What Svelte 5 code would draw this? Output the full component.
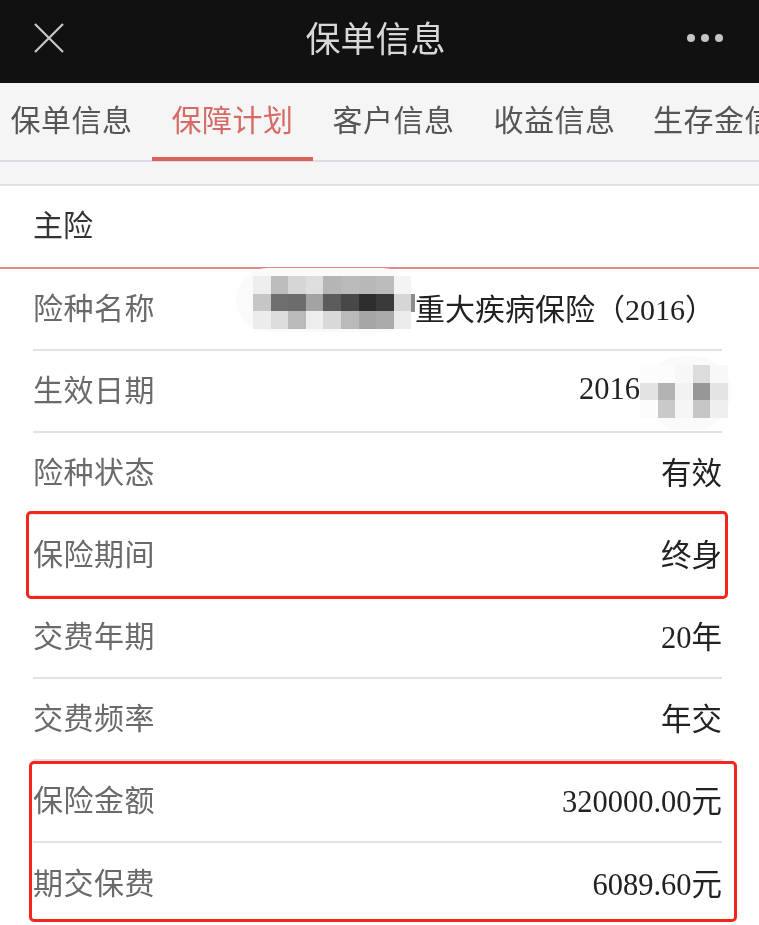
<script>
  const tabs = ['保单信息', '保障计划', '客户信息', '收益信息', '生存金信息'];
  const rows = [
    { label: '险种名称', value: '重大疾病保险（2016）', inset: 'name' },
    { label: '生效日期', value: '2016', inset: 'date' },
    { label: '险种状态', value: '有效' },
    { label: '保险期间', value: '终身' },
    { label: '交费年期', value: '20年' },
    { label: '交费频率', value: '年交' },
    { label: '保险金额', value: '320000.00元' },
    { label: '期交保费', value: '6089.60元' }
  ];
  const mosaicA = [
    '#eeeeee', '#bdbdbd', '#d6d6d6', '#dedede', '#b5b5b5', '#bababa', '#b8b8b8', '#bcbcbc', '#f4f4f4',
    '#c6c6c6', '#6f6f6f', '#6c6c6c', '#a3a3a3', '#5c5c5c', '#484848', '#2e2e2e', '#3a3a3a', '#d6d6d6',
    '#ececec', '#dcdcdc', '#b9b9b9', '#eeeeee', '#d9d9d9', '#b9b9b9', '#a6a6a6', '#ababab', '#ececec'
  ];
  const mosaicB = [
    '#fcfcfc', '#fcfcfc', '#f7f7f7', '#dcdcdc', '#f8f8f8',
    '#e3e3e3', '#b3b3b3', '#f2f2f2', '#979797', '#e4e4e4',
    '#fcfcfc', '#c9c9c9', '#f5f5f5', '#c6c6c6', '#efefef'
  ];
</script>

<div class="page">
  <header class="nav">
    <svg class="close" viewBox="0 0 32 32" width="32" height="32" aria-hidden="true">
      <path d="M2 2 L30 30 M30 2 L2 30" fill="none" stroke="#c8c8c8" stroke-width="2.2" />
    </svg>
    <h1>保单信息</h1>
    <div class="dots"><i></i><i></i><i></i></div>
  </header>

  <nav class="tabs">
    {#each tabs as tab, i}
      <div class="tab" class:active={i === 1} class:clipped={i === 4}>{tab}</div>
    {/each}
  </nav>

  <div class="gap"></div>

  <section class="sheet">
    <div class="title">主险</div>
    {#each rows as row, i}
      <div class="row" class:last={i === rows.length - 1}>
        <span class="label">{row.label}</span>
        <span class="value {row.inset ?? ''}">{row.value}</span>
      </div>
    {/each}

    <div class="blob blob-a"></div>
    <div class="mosaic mosaic-a">
      {#each mosaicA as c}<b style="background:{c}"></b>{/each}
    </div>
    <div class="sliver"></div>
    <div class="blob blob-b"></div>
    <div class="mosaic mosaic-b">
      {#each mosaicB as c}<b style="background:{c}"></b>{/each}
    </div>

    <div class="mark mark-a"></div>
    <div class="mark mark-b"></div>
  </section>
</div>

<style>
  :global(body) {
    margin: 0;
    background: #fff;
  }
  .page {
    width: 759px;
    height: 925px;
    overflow: hidden;
    font-family: "Noto Sans CJK SC", sans-serif;
    filter: blur(0.45px);
  }
  .nav {
    height: 83px;
    background: #111111;
    display: flex;
    align-items: center;
    justify-content: space-between;
    padding: 0 36px 8px 33px;
    box-sizing: border-box;
    position: relative;
  }
  .close {
    display: block;
  }
  h1 {
    margin: 0;
    position: absolute;
    left: 0;
    right: 8px;
    top: 12px;
    text-align: center;
    font-size: 35px;
    line-height: 50px;
    font-weight: 400;
    color: #d8d8d8;
  }
  .dots {
    display: flex;
    gap: 6px;
  }
  .dots i {
    width: 8px;
    height: 8px;
    border-radius: 50%;
    background: #c4c4c4;
  }
  .tabs {
    height: 79px;
    background: #f5f5f5;
    box-shadow: inset 0 -2px 0 #dcdce2;
    display: flex;
    margin-left: -9px;
    overflow: hidden;
  }
  .tab {
    flex: 0 0 161px;
    height: 78px;
    box-sizing: border-box;
    text-align: center;
    white-space: nowrap;
    font-size: 30px;
    line-height: 70px;
    letter-spacing: 0.5px;
    color: #555555;
  }
  .tab.active {
    color: #d66a66;
    border-bottom: 4px solid #d9605c;
  }
  .tab.clipped {
    text-align: left;
    padding-left: 18px;
  }
  .gap {
    height: 24px;
    background: #f5f5f5;
    box-sizing: border-box;
    border-bottom: 2px solid #e2e2e2;
  }
  .sheet {
    position: relative;
    background: #fff;
  }
  .title {
    height: 83px;
    box-sizing: border-box;
    padding: 0 33px;
    font-size: 30px;
    line-height: 74px;
    color: #333333;
    border-bottom: 2px solid #dd8a88;
  }
  .row {
    height: 82px;
    margin: 0 37px 0 33px;
    box-sizing: border-box;
    border-bottom: 2px solid #e2e2e2;
    display: flex;
    justify-content: space-between;
    align-items: center;
    padding-bottom: 6px;
    font-size: 30px;
    white-space: nowrap;
  }
  .row.last {
    border-bottom: none;
  }
  .label {
    color: #6a6a6a;
    letter-spacing: 0.5px;
  }
  .value {
    color: #222222;
    font-size: 30.5px;
    font-family: "Liberation Serif", "Noto Sans CJK SC", serif;
    padding-top: 2px;
  }
  .value.name {
    padding-right: 7px;
    font-size: 30px;
  }
  .value.date {
    padding-right: 82px;
  }
  .mosaic {
    position: absolute;
    display: grid;
  }
  .mosaic-a {
    left: 253px;
    top: 90px;
    grid-template-columns: repeat(9, 17.6px);
    grid-auto-rows: 17.6px;
  }
  .mosaic-b {
    left: 640px;
    top: 179px;
    grid-template-columns: repeat(5, 17.5px);
    grid-auto-rows: 17.5px;
  }
  .sliver {
    position: absolute;
    left: 411px;
    top: 108px;
    width: 4px;
    height: 18px;
    background: #8c8c8c;
  }
  .blob {
    position: absolute;
    background: #fafafa;
    border-radius: 40px;
  }
  .blob-a {
    left: 236px;
    top: 82px;
    width: 178px;
    height: 64px;
  }
  .blob-b {
    left: 645px;
    top: 170px;
    width: 86px;
    height: 74px;
  }
  .mark {
    position: absolute;
    box-sizing: border-box;
    border: 3px solid #f5251c;
    border-radius: 5px;
  }
  .mark-a {
    left: 26px;
    top: 325px;
    width: 702px;
    height: 88px;
  }
  .mark-b {
    left: 29px;
    top: 575px;
    width: 708px;
    height: 161px;
  }
</style>
